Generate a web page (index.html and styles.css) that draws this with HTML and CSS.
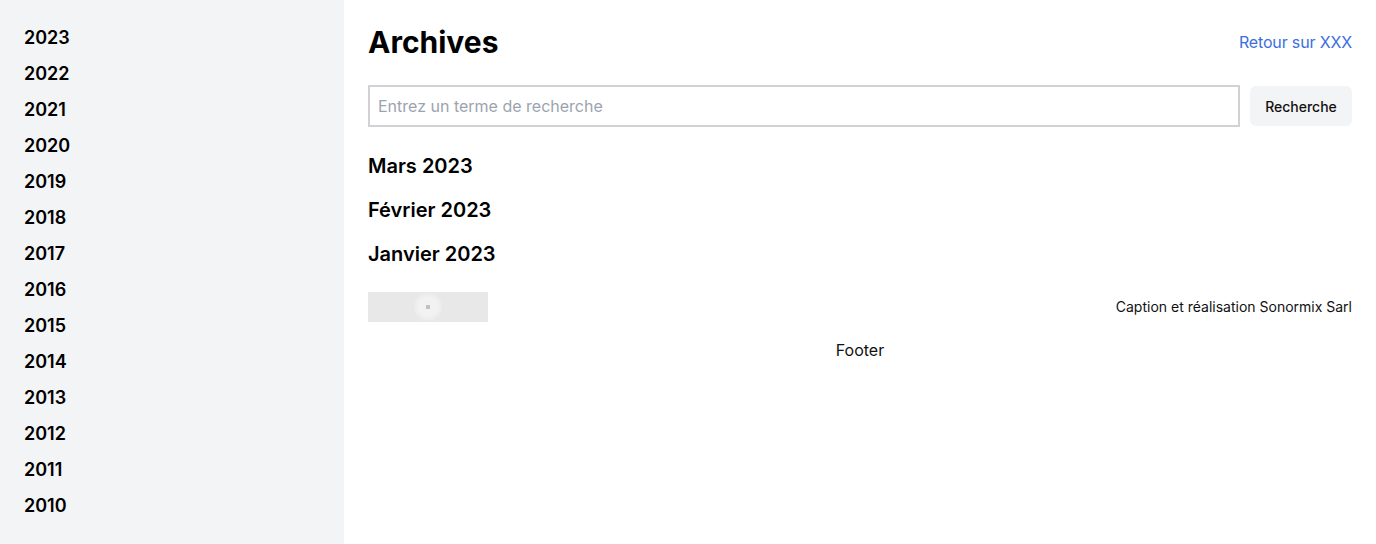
FILE: index.html
```html
<!DOCTYPE html>
<html lang="fr">
<head>
<meta charset="utf-8">
<title>Archives</title>
<link rel="stylesheet" href="styles.css">
</head>
<body>
<div class="layout">
  <aside class="sidebar">
    <ul class="years">
      <li>2023</li><li>2022</li><li>2021</li><li>2020</li><li>2019</li><li>2018</li><li>2017</li>
      <li>2016</li><li>2015</li><li>2014</li><li>2013</li><li>2012</li><li>2011</li><li>2010</li>
    </ul>
  </aside>
  <main class="main">
    <header class="header">
      <h1 class="title">Archives</h1>
      <a class="back" href="#">Retour sur XXX</a>
    </header>
    <form class="search">
      <input class="search-input" type="text" placeholder="Entrez un terme de recherche">
      <button class="search-btn" type="button">Recherche</button>
    </form>
    <div class="months">
      <h2 class="month">Mars 2023</h2>
      <h2 class="month">Février 2023</h2>
      <h2 class="month">Janvier 2023</h2>
    </div>
    <div class="credits">
      <div class="logo"><span class="logo-glow"><span class="logo-dot"></span></span></div>
      <p class="caption">Caption et réalisation Sonormix Sarl</p>
    </div>
    <footer class="footer">Footer</footer>
  </main>
</div>
</body>
</html>
```
FILE: styles.css
```css
* { box-sizing: border-box; }
html, body { margin: 0; padding: 0; }
body {
  font-family: Inter, "Noto Sans", sans-serif;
  color: #111;
  background: #fff;
}
.layout {
  display: flex;
  min-height: 544px;
}
.sidebar {
  width: 344px;
  flex-shrink: 0;
  background: #f3f4f6;
  padding: 24px 24px;
}
.years {
  list-style: none;
  margin: 0;
  padding: 0;
  display: flex;
  flex-direction: column;
  gap: 8px;
}
.years li {
  font-size: 18px;
  line-height: 28px;
  font-weight: 600;
  color: #000;
}
.main {
  flex: 1;
  padding: 24px 24px;
}
.header {
  display: flex;
  justify-content: space-between;
  align-items: center;
}
.title {
  margin: 0;
  font-size: 30px;
  line-height: 36px;
  font-weight: 700;
  color: #000;
}
.back {
  color: #3b6fe0;
  text-decoration: none;
  font-size: 16px;
  line-height: 24px;
  letter-spacing: -0.15px;
}
.search {
  display: flex;
  align-items: center;
  gap: 10px;
  margin-top: 25px;
}
.search-input {
  flex: 1;
  height: 42px;
  border: 2px solid #d1d1d6;
  padding: 0 8px;
  font-family: inherit;
  font-size: 16px;
  color: #111;
  outline: none;
}
.search-input::placeholder { color: #9ca3af; }
.search-btn {
  height: 40px;
  width: 102px;
  border: none;
  border-radius: 6px;
  background: #f3f4f6;
  font-family: inherit;
  font-size: 14px;
  font-weight: 500;
  color: #111;
}
.months {
  margin-top: 25px;
  display: flex;
  flex-direction: column;
  gap: 16px;
}
.month {
  margin: 0;
  font-size: 20px;
  line-height: 28px;
  font-weight: 600;
  color: #000;
}
.credits {
  margin-top: 24px;
  display: flex;
  justify-content: space-between;
  align-items: center;
}
.logo {
  width: 120px;
  height: 30px;
  background: #e8e8e8;
  display: flex;
  align-items: center;
  justify-content: center;
}
.logo-glow {
  width: 30px;
  height: 30px;
  border-radius: 50%;
  background: radial-gradient(circle, #f2f2f2 0 9px, #ececec 13px, #e8e8e8 15px);
  display: flex;
  align-items: center;
  justify-content: center;
}
.logo-dot {
  width: 4px;
  height: 4px;
  background: #c2c2c2;
}
.caption {
  margin: 0;
  font-size: 14px;
  line-height: 20px;
  color: #111;
}
.footer {
  margin-top: 16px;
  text-align: center;
  font-size: 16px;
  line-height: 24px;
  color: #111;
}
```
